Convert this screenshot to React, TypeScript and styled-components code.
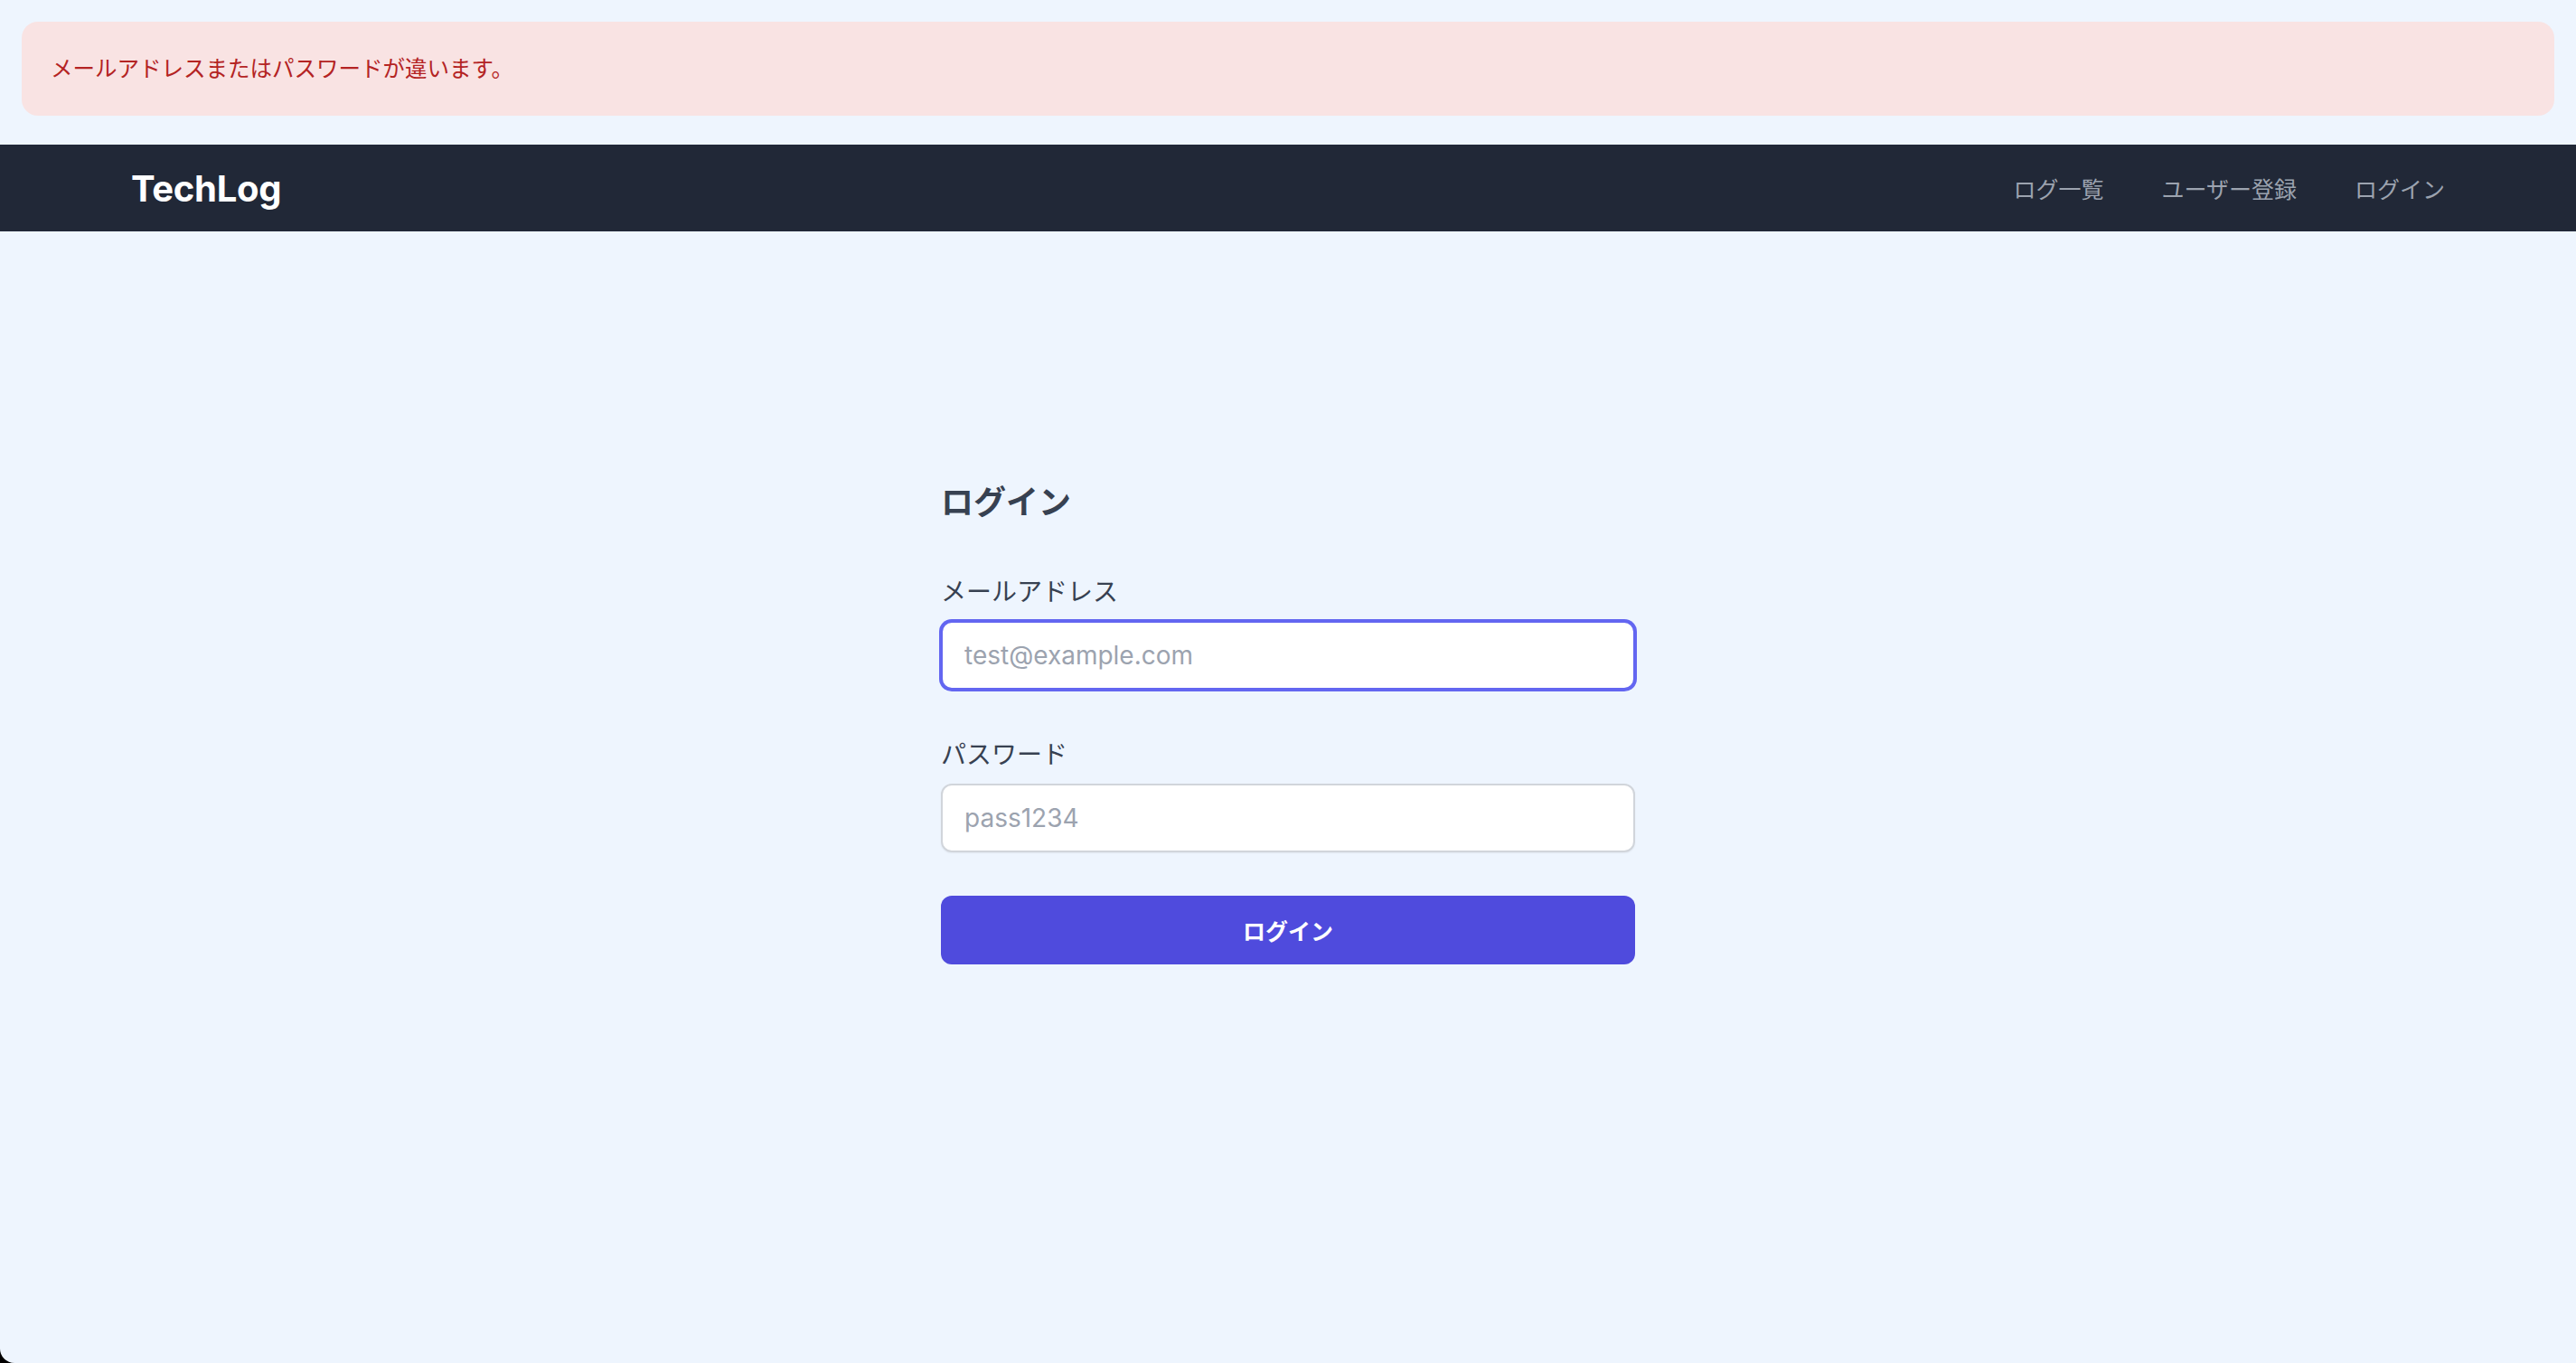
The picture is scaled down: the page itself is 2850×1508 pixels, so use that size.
import { createGlobalStyle, styled } from "styled-components";

const GlobalStyle = createGlobalStyle`
    * {
        box-sizing: border-box;
    }

    html,
    body {
        margin: 0;
        background: #000000;
        font-family: "Inter", "Noto Sans CJK JP", sans-serif;
        color: #374151;
    }
`;

const Page = styled.div`
    min-height: 1508px;
    display: flex;
    flex-direction: column;
    padding-top: 24px;
    background: #eef5fe;
    border-bottom-left-radius: 16px;
`;

const ErrorBanner = styled.div`
    margin: 0 24px;
    padding: 32px;
    background: #f9e3e3;
    border-radius: 18px;
    color: #b42323;
    font-size: 24.5px;
    line-height: 40px;
`;

const Header = styled.header`
    margin-top: 32px;
    height: 96px;
    background: #212837;
`;

const HeaderInner = styled.div`
    max-width: 2560px;
    height: 100%;
    margin: 0 auto;
    display: flex;
    align-items: center;
    justify-content: space-between;
`;

const Logo = styled.a`
    font-size: 40px;
    font-weight: 700;
    color: #ffffff;
    text-decoration: none;
    letter-spacing: -0.3px;
`;

const Nav = styled.nav`
    display: flex;
    align-items: center;
    gap: 64px;
`;

const NavLink = styled.a`
    font-size: 25px;
    color: #9ca3af;
    text-decoration: none;
`;

const Main = styled.main`
    display: flex;
    justify-content: center;
    padding-top: 273px;
`;

const Form = styled.form`
    width: 768px;
    display: flex;
    flex-direction: column;
`;

const Title = styled.h1`
    margin: 0 0 52px;
    font-size: 36px;
    line-height: 54px;
    font-weight: 700;
    color: #374151;
`;

const Field = styled.div<{ $last?: boolean }>`
    display: flex;
    flex-direction: column;
    margin-bottom: ${(p) => (p.$last ? "48px" : "52px")};
`;

const Label = styled.label`
    font-size: 28px;
    line-height: 40px;
    color: #374151;
    margin-bottom: 12px;
`;

const Input = styled.input<{ $active?: boolean }>`
    height: 76px;
    padding: 0 24px;
    border-radius: 12px;
    border: 2px solid ${(p) => (p.$active ? "#6366f1" : "#d1d5db")};
    box-shadow: ${(p) =>
        p.$active ? "0 0 0 2px #6366f1" : "0 1px 2px rgba(0, 0, 0, 0.06)"};
    background: #ffffff;
    font-family: "Inter", "Noto Sans CJK JP", sans-serif;
    font-size: 28px;
    color: #111827;
    outline: none;

    &::placeholder {
        color: #9ca3af;
    }
`;

const SubmitButton = styled.button`
    height: 76px;
    border: none;
    border-radius: 12px;
    background: #4f4bdd;
    color: #ffffff;
    font-family: "Inter", "Noto Sans CJK JP", sans-serif;
    font-size: 25px;
    font-weight: 600;
    cursor: pointer;
`;

const App = () => {
  return (
    <>
      <GlobalStyle />
      <Page>
        <ErrorBanner>メールアドレスまたはパスワードが違います。</ErrorBanner>
        <Header>
          <HeaderInner>
            <Logo href="#">TechLog</Logo>
            <Nav>
              <NavLink href="#">ログ一覧</NavLink>
              <NavLink href="#">ユーザー登録</NavLink>
              <NavLink href="#">ログイン</NavLink>
            </Nav>
          </HeaderInner>
        </Header>
        <Main>
          <Form onSubmit={(e) => e.preventDefault()}>
            <Title>ログイン</Title>
            <Field>
              <Label htmlFor="email">メールアドレス</Label>
              <Input id="email" type="email" placeholder="test@example.com" $active autoFocus />
            </Field>
            <Field $last>
              <Label htmlFor="password">パスワード</Label>
              <Input id="password" type="password" placeholder="pass1234" />
            </Field>
            <SubmitButton type="submit">ログイン</SubmitButton>
          </Form>
        </Main>
      </Page>
    </>
  );
};

export default App;
